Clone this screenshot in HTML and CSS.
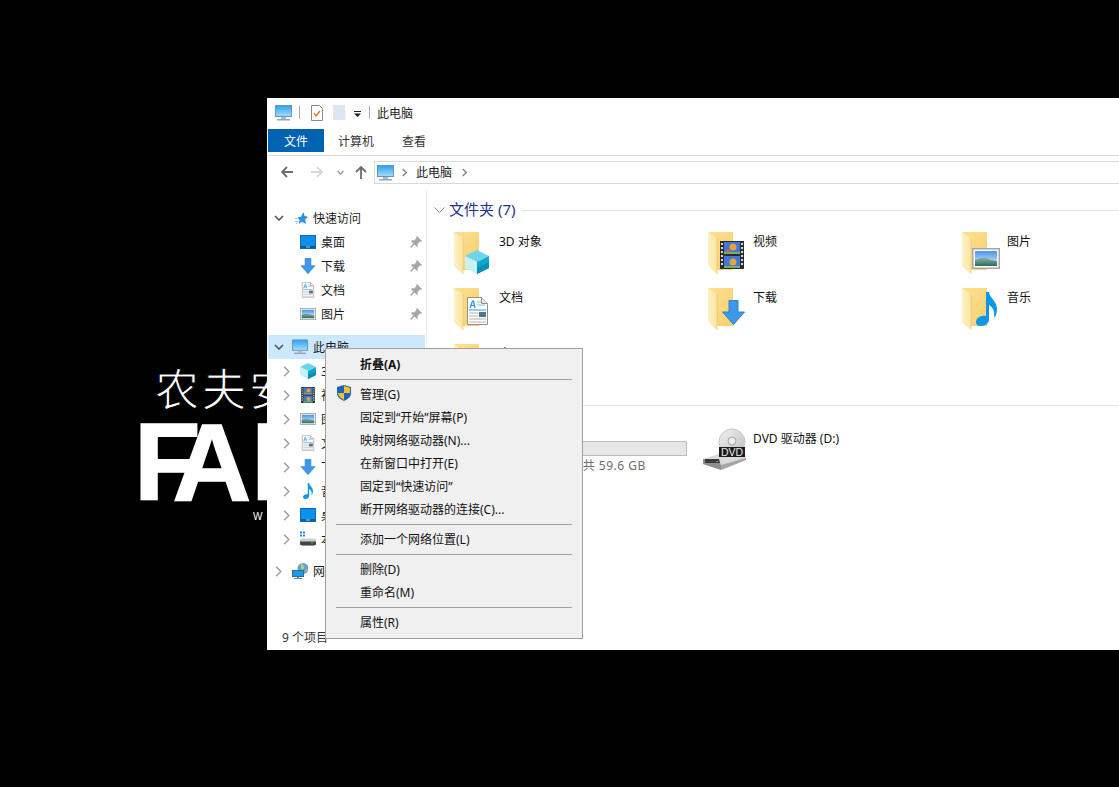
FILE: index.html
```html
<!DOCTYPE html>
<html lang="zh">
<head>
<meta charset="utf-8">
<title>此电脑</title>
<link rel="stylesheet" href="styles.css">
</head>
<body>
<svg class="sprite" xmlns="http://www.w3.org/2000/svg">
  <defs>
    <linearGradient id="g-back" x1="0" y1="0" x2="1" y2="1"><stop offset="0" stop-color="#fde08f"/><stop offset="1" stop-color="#f6d070"/></linearGradient>
    <linearGradient id="g-leaf" x1="0" y1="0" x2="1" y2="0"><stop offset="0" stop-color="#fdf0c4"/><stop offset="1" stop-color="#fce6a4"/></linearGradient>
    <linearGradient id="g-screen" x1="0" y1="0" x2="0" y2="1"><stop offset="0" stop-color="#2ea0ee"/><stop offset="1" stop-color="#a8ddfa"/></linearGradient>
    <linearGradient id="g-sky" x1="0" y1="0" x2="0" y2="1"><stop offset="0" stop-color="#4a94ea"/><stop offset="1" stop-color="#e2f0f4"/></linearGradient>
    <linearGradient id="g-land" x1="0" y1="0" x2="0" y2="1"><stop offset="0" stop-color="#86b3a0"/><stop offset="1" stop-color="#2f6a62"/></linearGradient>
    <linearGradient id="g-disc" x1="0" y1="0" x2="1" y2="1"><stop offset="0" stop-color="#f2f2f2"/><stop offset="1" stop-color="#bdbdbd"/></linearGradient>

    <symbol id="folder" viewBox="0 0 46 48">
      <path d="M1 4h25v38H10L1 37z" fill="url(#g-back)"/>
      <path d="M1 4l9 6v36l-9-8z" fill="url(#g-leaf)"/>
      <path d="M10 10v36" stroke="#e8c468" stroke-width=".6"/>
    </symbol>
    <symbol id="cube" viewBox="0 0 24 24">
      <path d="M12 0l12 6-12 6L0 6z" fill="#6dd5ea"/>
      <path d="M0 6l12 6v12L0 18z" fill="#c9f1f4"/>
      <path d="M12 12l12-6v12l-12 6z" fill="#0aa7cd"/>
      <path d="M12 18l12-6v6l-12 6z" fill="#0b8fb6"/>
    </symbol>
    <symbol id="doc" viewBox="0 0 21 28">
      <path d="M.5.5h14l6 6v21H.5z" fill="#fff" stroke="#8f8f8f"/>
      <path d="M14.5.5v6h6" fill="#e8e8e8" stroke="#8f8f8f"/>
      <path d="M3 11l2.500-7h1L8 11M4 8.500h3" fill="none" stroke="#2a8be0" stroke-width="1.200"/>
      <path d="M10 5h4M10 8h8" stroke="#8fb7dd"/>
      <path d="M2 13h17" stroke="#3a96e0"/>
      <path d="M2 16h9M2 19h9M2 22h17M2 25h17" stroke="#b0b0b0"/>
      <rect x="12" y="15" width="7" height="5" fill="#51728a"/>
    </symbol>
    <symbol id="film" viewBox="0 0 24 28">
      <rect width="24" height="28" fill="#2b2b2b"/>
      <rect x="4" y="1" width="16" height="12" fill="#3d78d8"/>
      <rect x="4" y="15" width="16" height="12" fill="#3d78d8"/>
      <circle cx="13" cy="6" r="3.500" fill="#e9a23a"/>
      <circle cx="8" cy="10" r="2" fill="#d8554f"/>
      <circle cx="13" cy="21" r="3.500" fill="#e9a23a"/>
      <path d="M4 11h16v2H4zM4 25h16v2H4z" fill="#7fae5a"/>
      <path d="M1 2h2v2H1zM1 6h2v2H1zM1 10h2v2H1zM1 14h2v2H1zM1 18h2v2H1zM1 22h2v2H1zM21 2h2v2h-2zM21 6h2v2h-2zM21 10h2v2h-2zM21 14h2v2h-2zM21 18h2v2h-2zM21 22h2v2h-2z" fill="#d8d8d8"/>
    </symbol>
    <symbol id="down" viewBox="0 0 23 25">
      <path d="M7 .5h9v11.500h6.500L11.500 24.500.5 12H7z" fill="#3d98ea" stroke="#2f80cc"/>
    </symbol>
    <symbol id="pic" viewBox="0 0 28 21">
      <rect x=".75" y=".75" width="26.500" height="19.500" fill="#fff" stroke="#a6a6a6" stroke-width="1.500"/>
      <rect x="3" y="3" width="22" height="15" fill="url(#g-sky)"/>
      <path d="M3 12l6-2 5 0 5 2 6 1v5H3z" fill="url(#g-land)"/>
    </symbol>
    <symbol id="music" viewBox="0 0 21 34">
      <path d="M10 0h3c0 5 8 9 8 17 0 4-1 7-3 9 1-6-1-11-5-13v15c0 3-4 6-8 6s-5-2-5-4c0-4 5-7 10-6z" fill="#0e97e8"/>
    </symbol>
    <symbol id="monitor" viewBox="0 0 17 16">
      <rect x=".5" y=".5" width="16" height="11" fill="url(#g-screen)" stroke="#5f97bd"/>
      <rect x="6" y="12" width="5" height="2" fill="#a9bbc8"/>
      <rect x="2" y="14" width="13" height="1.500" fill="#9aa7b0"/>
    </symbol>
    <symbol id="desk" viewBox="0 0 16 14">
      <rect x=".5" y=".5" width="15" height="13" fill="#0e90e8" stroke="#0a6fbb"/>
      <rect x="1" y="11" width="14" height="2" fill="#0a5c9c"/>
      <rect x="6" y="11.500" width="4" height="1" fill="#9bd2f5"/>
    </symbol>
    <symbol id="star" viewBox="0 0 14 14">
      <path d="M9 0l1.300 4.300L14 5l-3 3 .8 5L7.500 10.500 4 13l1-4.500L2.500 6l4-1z" fill="#2f8fe0"/>
      <path d="M0 7h3M0 10h3M1 13l3-3" stroke="#8cc4f2"/>
    </symbol>
    <symbol id="pin" viewBox="0 0 12 12">
      <path d="M7 0l5 5-1 1-1-.5L7.500 8l.5 2-1 1-2.500-2.500L1 12 0 11l3.500-3.500L1 5l1-1 2 .5L6.500 2 6 1z" fill="#a2a7ae"/>
    </symbol>
    <symbol id="disk" viewBox="0 0 16 15">
      <path d="M0 8l2-1h12l2 1v5l-2 1H2l-2-1z" fill="#cfcfcf"/>
      <path d="M0 10h16v3l-2 1H2l-2-1z" fill="#444"/>
      <rect x="11" y="11" width="2" height="1" fill="#3ec24a"/>
      <path d="M0 0h2v2H0zM3 0h2v2H3zM0 3h2v2H0zM3 3h2v2H3z" fill="#1b8fe6"/>
    </symbol>
    <symbol id="net" viewBox="0 0 16 16">
      <circle cx="11" cy="5.500" r="5.500" fill="#6f9fc4"/>
      <path d="M9 .5c2 1 3 2 3 4s-2 2-3 1zM13 7l2-1-1 3z" fill="#a7d28f"/>
      <rect x=".5" y="7.500" width="11" height="6" fill="#1c9ae8" stroke="#2c6f9f"/>
      <path d="M5 14h2v1h3v1H2v-1h3z" fill="#5f8fb0"/>
    </symbol>
    <symbol id="shield" viewBox="0 0 14 16">
      <path d="M7 0l7 2v6c0 4-3 6-7 8-4-2-7-4-7-8V2z" fill="#1c62b8"/>
      <path d="M7 1l6 1.700V8H7zM7 8H1c0 3 3 5 6 7z" fill="#f6bf2d"/>
    </symbol>
    <symbol id="dvd" viewBox="0 0 51 48">
      <circle cx="30" cy="16" r="13" fill="url(#g-disc)" stroke="#c8c8c8"/>
      <circle cx="30" cy="15" r="4" fill="#e6e6e6" stroke="#aaa"/>
      <circle cx="30" cy="15" r="1.500" fill="#fff"/>
      <path d="M1 33l16-5h26l1 3v3L19 44 1 38z" fill="#d9d9d9"/>
      <path d="M19 39l25-7v2L19 44z" fill="#a5a5a5"/>
      <path d="M1 33l16 0v2l2 4v5L1 38z" fill="#8f8f8f"/>
      <path d="M3 33h14l1 4H3z" fill="#3a3a3a"/>
      <rect x="14" y="35" width="2" height="1" fill="#3ec24a"/>
      <rect x="17" y="21" width="26" height="10" fill="#1c1c1c"/>
    </symbol>
    <symbol id="chev-d" viewBox="0 0 10 6"><path d="M1 1l4 4 4-4" fill="none" stroke="#555" stroke-width="1.600"/></symbol>
    <symbol id="chev-r" viewBox="0 0 7 12"><path d="M1 1l5 5-5 5" fill="none" stroke="currentColor" stroke-width="1.800"/></symbol>
  </defs>
</svg>

<div class="wallpaper" aria-hidden="true">
  <div class="wp-cn">农夫安全</div>
  <div class="wp-en"><span class="wp-f">F</span>ARMER</div>
  <div class="wp-url">WWW</div>
</div>

<div class="window">
  <div class="titlebar">
    <svg class="qa-pc"><use href="#monitor"/></svg>
    <span class="qa-sep"></span>
    <svg class="qa-check" viewBox="0 0 12 16"><path d="M.5.5h8l3 3v12H.5z" fill="#fff" stroke="#8a8a8a"/><path d="M3 8l2 3 4-5" fill="none" stroke="#e8622c" stroke-width="1.300"/></svg>
    <svg class="qa-blank" viewBox="0 0 13 16"><rect width="12" height="15" fill="#dde6f3"/><path d="M12 15h1V5h-1z" fill="#eef1f6"/></svg>
    <svg class="qa-drop" viewBox="0 0 7 6"><path d="M0 0h7v1H0zM0 2.500h7L3.500 6z" fill="#222"/></svg>
    <span class="qa-sep qa-sep2"></span>
    <span class="title-text">此电脑</span>
  </div>
  <div class="tabs">
    <span class="tab tab-file">文件</span>
    <span class="tab">计算机</span>
    <span class="tab">查看</span>
  </div>
  <div class="addr-row">
    <svg class="nav-back" viewBox="0 0 12 12"><path d="M6 1L1 6l5 5M1 6h11" fill="none" stroke="#6d6d6d" stroke-width="1.800"/></svg>
    <svg class="nav-fwd" viewBox="0 0 12 12"><path d="M6 1l5 5-5 5M11 6H0" fill="none" stroke="#d8d8d8" stroke-width="1.800"/></svg>
    <svg class="nav-recent" viewBox="0 0 7 5"><path d="M.5 1l3 3 3-3" fill="none" stroke="#9a9a9a" stroke-width="1.300"/></svg>
    <svg class="nav-up" viewBox="0 0 12 13"><path d="M1 6l5-5 5 5M6 1v12" fill="none" stroke="#6d6d6d" stroke-width="1.800"/></svg>
    <div class="addr">
      <svg class="addr-pc"><use href="#monitor"/></svg>
      <svg class="addr-chev"><use href="#chev-r"/></svg>
      <span class="addr-text">此电脑</span>
      <svg class="addr-chev addr-chev2"><use href="#chev-r"/></svg>
    </div>
  </div>

  <div class="main">
    <nav class="nav">
      <div class="row top"><svg class="chev-d"><use href="#chev-d"/></svg><svg class="ico ico-star"><use href="#star"/></svg><span class="txt">快速访问</span></div>
      <div class="row sub"><span class="chev-none"></span><svg class="ico"><use href="#desk"/></svg><span class="txt">桌面</span><svg class="pin"><use href="#pin"/></svg></div>
      <div class="row sub"><span class="chev-none"></span><svg class="ico"><use href="#down"/></svg><span class="txt">下载</span><svg class="pin"><use href="#pin"/></svg></div>
      <div class="row sub"><span class="chev-none"></span><svg class="ico"><use href="#doc"/></svg><span class="txt">文档</span><svg class="pin"><use href="#pin"/></svg></div>
      <div class="row sub"><span class="chev-none"></span><svg class="ico"><use href="#pic"/></svg><span class="txt">图片</span><svg class="pin"><use href="#pin"/></svg></div>

      <div class="row top selected"><svg class="chev-d"><use href="#chev-d"/></svg><svg class="ico"><use href="#monitor"/></svg><span class="txt">此电脑</span></div>
      <div class="row sub"><svg class="chev-r"><use href="#chev-r"/></svg><svg class="ico"><use href="#cube"/></svg><span class="txt">3D 对象</span></div>
      <div class="row sub"><svg class="chev-r"><use href="#chev-r"/></svg><svg class="ico"><use href="#film"/></svg><span class="txt">视频</span></div>
      <div class="row sub"><svg class="chev-r"><use href="#chev-r"/></svg><svg class="ico"><use href="#pic"/></svg><span class="txt">图片</span></div>
      <div class="row sub"><svg class="chev-r"><use href="#chev-r"/></svg><svg class="ico"><use href="#doc"/></svg><span class="txt">文档</span></div>
      <div class="row sub"><svg class="chev-r"><use href="#chev-r"/></svg><svg class="ico"><use href="#down"/></svg><span class="txt">下载</span></div>
      <div class="row sub"><svg class="chev-r"><use href="#chev-r"/></svg><svg class="ico"><use href="#music"/></svg><span class="txt">音乐</span></div>
      <div class="row sub"><svg class="chev-r"><use href="#chev-r"/></svg><svg class="ico"><use href="#desk"/></svg><span class="txt">桌面</span></div>
      <div class="row sub"><svg class="chev-r"><use href="#chev-r"/></svg><svg class="ico"><use href="#disk"/></svg><span class="txt">本地磁盘</span></div>

      <div class="row top network"><svg class="chev-r"><use href="#chev-r"/></svg><svg class="ico"><use href="#net"/></svg><span class="txt">网络</span></div>
    </nav>

    <section class="content">
      <div class="group-head">
        <svg class="group-chev" viewBox="0 0 11 6"><path d="M.5.5l5 5 5-5" fill="none" stroke="#8a8a8a"/></svg>
        <span class="group-title">文件夹 (7)</span>
        <span class="group-line"></span>
      </div>
      <div class="grid">
        <div class="item"><svg class="big" viewBox="0 0 46 48"><use href="#folder"/><use href="#cube" x="12" y="22" width="24" height="24"/></svg><span class="label">3D 对象</span></div>
        <div class="item"><svg class="big" viewBox="0 0 46 48"><use href="#folder"/><use href="#film" x="13" y="13" width="24" height="28"/></svg><span class="label">视频</span></div>
        <div class="item"><svg class="big" viewBox="0 0 46 48"><use href="#folder"/><use href="#pic" x="11" y="20" width="28" height="21"/></svg><span class="label">图片</span></div>
        <div class="item"><svg class="big" viewBox="0 0 46 48"><use href="#folder"/><use href="#doc" x="14" y="13" width="21" height="28"/></svg><span class="label">文档</span></div>
        <div class="item"><svg class="big" viewBox="0 0 46 48"><use href="#folder"/><use href="#down" x="15" y="16" width="23" height="25"/></svg><span class="label">下载</span></div>
        <div class="item"><svg class="big" viewBox="0 0 46 48"><use href="#folder"/><use href="#music" x="15" y="8" width="21" height="34"/></svg><span class="label">音乐</span></div>
        <div class="item"><svg class="big" viewBox="0 0 46 48"><use href="#folder"/></svg><span class="label">桌面</span></div>
      </div>
      <div class="group-head group-head2">
        <svg class="group-chev" viewBox="0 0 11 6"><path d="M.5.5l5 5 5-5" fill="none" stroke="#8a8a8a"/></svg>
        <span class="group-title">设备和驱动器 (2)</span>
        <span class="group-line"></span>
      </div>
      <div class="grid grid2">
        <div class="item">
          <svg class="big" viewBox="0 0 46 48"><use href="#disk"/></svg>
          <div class="disk-info">
            <span class="label">本地磁盘 (C:)</span>
            <div class="bar"></div>
            <span class="free">2.1 GB 可用，共 59.6 GB</span>
          </div>
        </div>
        <div class="item"><svg class="drive-ico" viewBox="0 0 51 48"><use href="#dvd"/><text class="dvd-text" x="30" y="30">DVD</text></svg><span class="label dvd-label">DVD 驱动器 (D:)</span></div>
      </div>
    </section>
  </div>
  <div class="status">9 个项目</div>
</div>

<div class="menu">
  <div class="mi bold">折叠(A)</div>
  <div class="ms"></div>
  <div class="mi"><svg class="shield"><use href="#shield"/></svg>管理(G)</div>
  <div class="mi">固定到“开始”屏幕(P)</div>
  <div class="mi">映射网络驱动器(N)...</div>
  <div class="mi">在新窗口中打开(E)</div>
  <div class="mi">固定到“快速访问”</div>
  <div class="mi">断开网络驱动器的连接(C)...</div>
  <div class="ms"></div>
  <div class="mi">添加一个网络位置(L)</div>
  <div class="ms"></div>
  <div class="mi">删除(D)</div>
  <div class="mi">重命名(M)</div>
  <div class="ms"></div>
  <div class="mi">属性(R)</div>
</div>
</body>
</html>
```
FILE: styles.css
```css
* { box-sizing: border-box; }
html, body { margin: 0; height: 100%; }
body {
  background: #000;
  overflow: hidden;
  position: relative;
  font-family: "Noto Sans", "Noto Sans CJK SC", sans-serif;
  font-size: 12px;
  color: #000;
}
.sprite { position: absolute; width: 0; height: 0; }

/* wallpaper */
.wallpaper { position: absolute; left: 139px; top: 358px; color: #fff; width: 300px; }
.wp-cn {
  font-family: "Noto Sans CJK SC", sans-serif;
  font-size: 44px;
  line-height: 58px;
  letter-spacing: 3px;
  margin-left: 16px;
  font-weight: 400;
  -webkit-text-stroke: 1px #000;
  paint-order: fill stroke;
  white-space: nowrap;
}
.wp-en {
  font-family: "Liberation Sans", sans-serif;
  font-weight: 700;
  font-size: 109px;
  line-height: 92px;
  margin-left: -5px;
  white-space: nowrap;
  -webkit-text-stroke: 1.5px #fff;
}
.wp-f { letter-spacing: -28px; }
.wp-url { font-family: "Liberation Sans", sans-serif; font-size: 10px; margin-left: 114px; margin-top: 3px; letter-spacing: 5px; }

/* window */
.window {
  position: absolute;
  left: 267px;
  top: 98px;
  width: 852px;
  height: 552px;
  background: #fff;
  display: flex;
  flex-direction: column;
  overflow: hidden;
}
.titlebar { height: 29px; display: flex; align-items: center; padding-left: 8px; flex: none; }
.qa-pc { width: 17px; height: 16px; }
.qa-sep { width: 1px; height: 13px; background: #a8a8a8; margin-left: 7px; }
.qa-check { width: 12px; height: 16px; margin-left: 11px; }
.qa-blank { width: 13px; height: 16px; margin-left: 10px; }
.qa-drop { width: 7px; height: 6px; margin-left: 8px; margin-top: 3px; }
.qa-sep2 { margin-left: 8px; }
.title-text { margin-left: 7px; color: #222; }

.tabs {
  height: 29px;
  flex: none;
  display: flex;
  padding: 2px 0 0 1px;
  border-bottom: 1px solid #dadbdc;
  align-items: flex-start;
}
.tab { height: 23px; line-height: 25px; padding: 0 14px; color: #333; }
.tab-file { width: 56px; padding: 0; text-align: center; background: #0063b1; color: #fff; }

.addr-row { height: 34px; flex: none; display: flex; align-items: flex-start; padding-left: 14px; }
.nav-back, .nav-fwd { width: 12px; height: 12px; margin-top: 10px; }
.nav-fwd { margin-left: 18px; }
.nav-recent { width: 7px; height: 5px; margin-left: 14px; margin-top: 14px; }
.nav-up { width: 12px; height: 13px; margin-left: 11px; margin-top: 10px; }
.addr {
  margin: 5px -10px 0 7px;
  flex: 1;
  height: 23px;
  border: 1px solid #d9d9d9;
  display: flex;
  align-items: center;
  padding-left: 2px;
}
.addr-pc { width: 17px; height: 16px; }
.addr-chev { width: 5px; height: 9px; margin-left: 8px; color: #808080; }
.addr-text { margin: -2px 0 0 9px; color: #222; }
.addr-chev2 { margin-left: 10px; }

.main { flex: 1; min-height: 0; display: flex; }
.nav { width: 160px; flex: none; padding-top: 16px; border-right: 1px solid #f0f0f0; }
.row { height: 24px; margin: 0 1px; display: flex; align-items: center; color: #1a1a1a; white-space: nowrap; padding-right: 3px; }
.row.top { padding-left: 6px; }
.row.sub { padding-left: 14px; }
.row.selected { background: #cce8ff; margin-top: 9px; }
.row.network { margin-top: 8px; padding-left: 6px; }
.chev-d { width: 10px; height: 6px; margin-right: 8px; flex: none; }
.chev-r { width: 7px; height: 11px; margin: 0 10px 0 1px; flex: none; color: #a6a6a6; }
.chev-none { width: 10px; margin-right: 8px; flex: none; }
.ico { width: 16px; height: 16px; margin-right: 5px; flex: none; }
.ico-star { width: 13px; height: 13px; margin-left: 3px; }
.pin { width: 12px; height: 12px; margin-left: auto; flex: none; }

.content { flex: 1; min-width: 0; }
.group-head { display: flex; align-items: center; height: 20px; margin-top: 10px; padding-left: 7px; }
.group-chev { width: 11px; height: 6px; flex: none; }
.group-title { margin: -3px 0 0 4px; font-size: 15px; color: #1e3287; white-space: nowrap; }
.group-line { flex: 1; height: 1px; background: #e5e5e5; margin-left: 7px; }
.group-head2 { margin-top: 0; height: 18px; }
.grid { display: grid; grid-template-columns: repeat(3, 254px); grid-auto-rows: 56px; margin-top: 8px; padding-left: 26px; }
.grid2 { margin-top: 0; }
.item { display: flex; align-items: flex-start; }
.big { width: 46px; height: 48px; flex: none; }
.label { margin-top: 5px; line-height: 18px; color: #111; white-space: nowrap; }
.drive-ico { width: 51px; height: 48px; margin: 12px 0 0 -5px; flex: none; }
.dvd-label { margin-top: 16px; }
.dvd-text { font-family: "Liberation Sans", sans-serif; font-size: 10.5px; fill: #e8e8e8; text-anchor: middle; }
.disk-info { display: flex; flex-direction: column; width: 188px; }
.disk-info .label { margin-top: 1px; height: 26px; }
.bar { height: 15px; background: #e6e6e6; border: 1px solid #bcbcbc; }
.free { line-height: 18px; color: #6d6d6d; white-space: nowrap; padding-left: 3px; letter-spacing: .5px; margin-top: 1px; }
.status { height: 26px; flex: none; line-height: 27px; padding-left: 15px; color: #333; }

/* context menu */
.menu {
  position: absolute;
  left: 325px;
  top: 348px;
  width: 258px;
  height: 291px;
  background: #f0f0f0;
  border: 1px solid #a0a0a0;
  padding: 4px 0;
}
.mi { position: relative; height: 23px; line-height: 24px; padding-left: 34px; color: #111; white-space: nowrap; }
.bold { font-weight: 700; }
.ms { height: 7px; padding: 3px 10px; }
.ms::before { content: ""; display: block; height: 1px; background: #a0a0a0; width: 236px; }
.shield { position: absolute; left: 11px; top: 2px; width: 14px; height: 16px; }
```
